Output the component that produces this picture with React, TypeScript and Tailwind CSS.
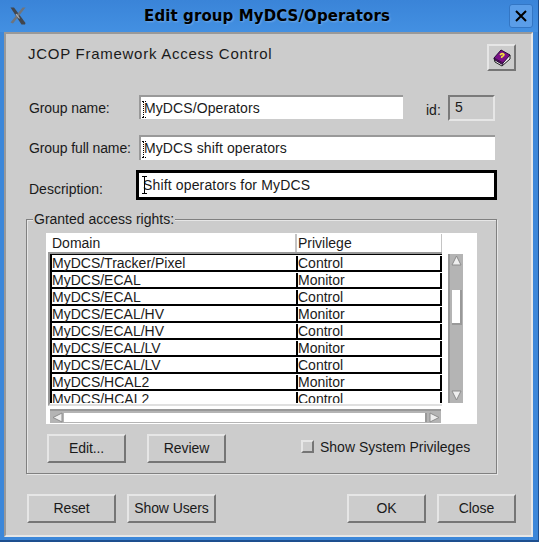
import React from 'react';

const rows = [
  ['MyDCS/Tracker/Pixel', 'Control'],
  ['MyDCS/ECAL', 'Monitor'],
  ['MyDCS/ECAL', 'Control'],
  ['MyDCS/ECAL/HV', 'Monitor'],
  ['MyDCS/ECAL/HV', 'Control'],
  ['MyDCS/ECAL/LV', 'Monitor'],
  ['MyDCS/ECAL/LV', 'Control'],
  ['MyDCS/HCAL2', 'Monitor'],
  ['MyDCS/HCAL2', 'Control'],
];

const raised =
  'border-2 border-t-[#e6e6e6] border-l-[#e6e6e6] border-r-[#757575] border-b-[#757575] bg-[#cccccc]';
const sunken = 'border-t-2 border-l-2 border-[#999999] bg-white';

const Button: React.FC<{ label: string; className: string }> = ({ label, className }) => (
  <button className={`${raised} ${className} h-[29px] text-[14px] tracking-[-0.1px] text-[#1a1a1a] flex items-center justify-center`}>
    {label}
  </button>
);

const Caret: React.FC = () => (
  <span className="absolute left-[1px] top-[4px] h-[17px] w-[4px] border-y border-r-0 border-black border-dotted">
    <span className="block h-full w-[2px] border-r border-dotted border-black" />
  </span>
);

const Arrow: React.FC<{ points: string }> = ({ points }) => (
  <svg width="11" height="11" viewBox="0 0 11 11">
    <polygon points={points} fill="#eeeeee" stroke="#8c8c8c" strokeWidth="1" />
  </svg>
);

const App: React.FC = () => {
  return (
    <div className="h-[542px] w-[539px] overflow-hidden bg-[#3c87d9] border-b-2 border-r border-[#1d4f8f] font-['Liberation_Sans',Arial,sans-serif] text-[#1a1a1a]">
      {/* Title bar */}
      <div className="flex h-[32px] items-center pl-[10px] pr-[5px] bg-linear-to-b from-[#3a84d8] to-[#4390e2]">
        <svg width="16" height="18" viewBox="0 0 16 18" className="mt-[-1px] shrink-0">
          <path d="M0.5 0.5 L4 0.5 L15.5 16 L15 17.5 L11.5 17.5 Z" fill="#41464e" />
          <path d="M15.5 0.5 L12.5 0.5 L0.5 15.5 L3 16.5 Z" fill="#6f747c" />
          <path d="M6 7 L9.5 11.5" stroke="#aeb3bb" strokeWidth="1.2" />
        </svg>
        <div className="flex-1 pr-[1px] text-center font-['DejaVu_Sans',sans-serif] text-[15px] font-bold tracking-[0.1px] text-black [text-shadow:1px_1px_2px_rgba(255,255,255,0.25)]">
          Edit group MyDCS/Operators
        </div>
        <div className="flex h-[24px] w-[24px] shrink-0 items-center justify-center rounded-[3px] border border-[#3376c4] bg-[#5a9de8]">
          <svg width="12" height="12" viewBox="0 0 12 12">
            <path d="M1 1 L11 11 M11 1 L1 11" stroke="#000" strokeWidth="2" />
          </svg>
        </div>
      </div>

      {/* Window body */}
      <div className="ml-[4px] h-[505px] w-[529px] border-2 border-t-[#999999] border-l-[#999999] border-r-[#e6e6e6] border-b-[#e6e6e6] bg-[#cccccc]">
        <div className="flex pt-[10px] pl-[22px] pr-[15px] h-[61px]">
          <div className="flex-1 pt-[1px] text-[15px] leading-[18px] tracking-[0.73px]">JCOP Framework Access Control</div>
          <button className={`${raised} flex h-[27px] w-[29px] items-center justify-center`}>
            <svg width="18" height="18" viewBox="0 0 18 18">
              <path d="M1 9 L2 13 L9 17 L17 10 L17 6 Z" fill="#f2f2f2" stroke="#1c1c1c" strokeWidth="1" />
              <path d="M1 9 L8 1 L17 6 L10 14 Z" fill="#7a1088" stroke="#2a0a3a" strokeWidth="1" />
              <path d="M1 9 L2 11 L9.5 15.5 L10 14" fill="#4a0a55" stroke="#2a0a3a" strokeWidth="1" />
              <path d="M7 6 Q9 3.5 11 5.5 Q11 7 9 7.5 L8.5 9" fill="none" stroke="#f2e63a" strokeWidth="1.6" />
            </svg>
          </button>
        </div>

        <div className="flex h-[26px] items-center pl-[23px]">
          <div className="w-[110px] text-[14px] tracking-[-0.1px]">Group name:</div>
          <div className={`${sunken} relative h-[24px] w-[264px] self-start pl-[3px] text-[14px] leading-[22px] tracking-[0.1px]`}>
            <Caret />
            MyDCS/Operators
          </div>
          <div className="ml-[23px] w-[22px] pt-[4px] text-[14px]">id:</div>
          <div className="h-[26px] w-[47px] border-2 border-t-[#7a7a7a] border-l-[#7a7a7a] border-r-[#e6e6e6] border-b-[#e6e6e6] pl-[5px] text-[14px] leading-[20px]">
            5
          </div>
        </div>

        <div className="mt-[14px] flex h-[25px] items-center pl-[23px]">
          <div className="w-[110px] pt-[1px] text-[14px] tracking-[-0.1px] whitespace-nowrap">Group full name:</div>
          <div className={`${sunken} relative h-[25px] w-[356px] pl-[3px] text-[14px] leading-[23px] tracking-[0.1px]`}>
            <Caret />
            MyDCS shift operators
          </div>
        </div>

        <div className="mt-[10px] flex h-[30px] items-center pl-[23px]">
          <div className="w-[107px] pt-[8px] text-[14px]">Description:</div>
          <div className="relative h-[30px] w-[361px] border-[3px] border-black bg-white pl-[4px] text-[14px] leading-[24px] tracking-[0.15px]">
            <span className="absolute left-[3px] top-[3px] h-[18px] w-[5px] border-y border-black">
              <span className="block h-full w-[3px] border-r border-black" />
            </span>
            Shift operators for MyDCS
          </div>
        </div>

        {/* Granted access rights */}
        <div className="relative ml-[20px] mt-[19px] h-[255px] w-[471px] border border-[#808080] shadow-[inset_1px_1px_0_#e6e6e6,1px_1px_0_#e6e6e6] pl-[19px] pt-[13px]">
          <span className="absolute left-[6px] top-[-9px] bg-[#cccccc] px-[1px] text-[14px] leading-[17px]">
            Granted access rights:
          </span>

          <div className="flex h-[191px] w-[431px] bg-white pl-[2px] pt-[1px]">
            <div className="w-[394px]">
              <div className="flex h-[18px] pl-[2px] text-[14px] leading-[18px]">
                <div className="w-[247px] border-r-2 border-[#c4c4c4] pl-[2px]">Domain</div>
                <div className="w-[145px] border-r border-[#c4c4c4] pl-[1px]">Privilege</div>
              </div>
              <div className="h-[154px] w-[394px] overflow-hidden border-y-2 border-l-2 border-t-[#999999] border-b-[#e0e0e0] border-l-[#999999]">
                <div className="h-[149px] w-[392px] overflow-hidden border-t border-black">
                  {rows.map(([domain, privilege], i) => (
                    <div key={i} className="flex h-[17px] border-b-2 border-l-2 border-black pt-[1px] text-[14px] leading-[15px]">
                      <div className="w-[246px] border-r-2 border-black whitespace-nowrap">{domain}</div>
                      <div className="w-[144px] border-r-2 border-black">{privilege}</div>
                    </div>
                  ))}
                </div>
              </div>
              {/* Horizontal scrollbar */}
              <div className="mt-[3px] ml-[2px] flex h-[14px] w-[391px] items-center bg-[#b4b4b4] border-t-2 border-[#999999]">
                <div className="flex w-[14px] justify-center"><Arrow points="1,5.5 10,1 10,10" /></div>
                <div className="h-[9px] flex-1 border-r-2 border-[#999999] bg-white" />
                <div className="flex w-[14px] justify-center"><Arrow points="10,5.5 1,1 1,10" /></div>
              </div>
            </div>
            {/* Vertical scrollbar */}
            <div className="ml-[6px] mt-[20px] flex h-[149px] w-[15px] flex-col items-center bg-[#b4b4b4] border-l-2 border-[#999999]">
              <div className="flex h-[13px] w-full justify-center pt-[1px]"><Arrow points="5.5,1 10,10 1,10" /></div>
              <div className="mt-[23px] h-[35px] w-[10px] border-r-2 border-b-2 border-[#999999] bg-white" />
              <div className="mt-auto flex h-[13px] w-full justify-center"><Arrow points="5.5,10 10,1 1,1" /></div>
            </div>
          </div>

          <div className="ml-[1px] mt-[10px] flex items-start">
            <Button label="Edit..." className="w-[79px]" />
            <Button label="Review" className="ml-[21px] w-[79px]" />
            <div className={`${raised} ml-[75px] mt-[6px] h-[13px] w-[13px]`} />
            <span className="ml-[6px] mt-[5px] text-[14px] leading-[17px]">Show System Privileges</span>
          </div>
        </div>

        <div className="mt-[20px] flex pl-[21px]">
          <Button label="Reset" className="w-[89px]" />
          <Button label="Show Users" className="ml-[11px] w-[89px]" />
          <Button label="OK" className="ml-[131px] w-[79px]" />
          <Button label="Close" className="ml-[11px] w-[79px]" />
        </div>
      </div>
    </div>
  );
};

export default App;
